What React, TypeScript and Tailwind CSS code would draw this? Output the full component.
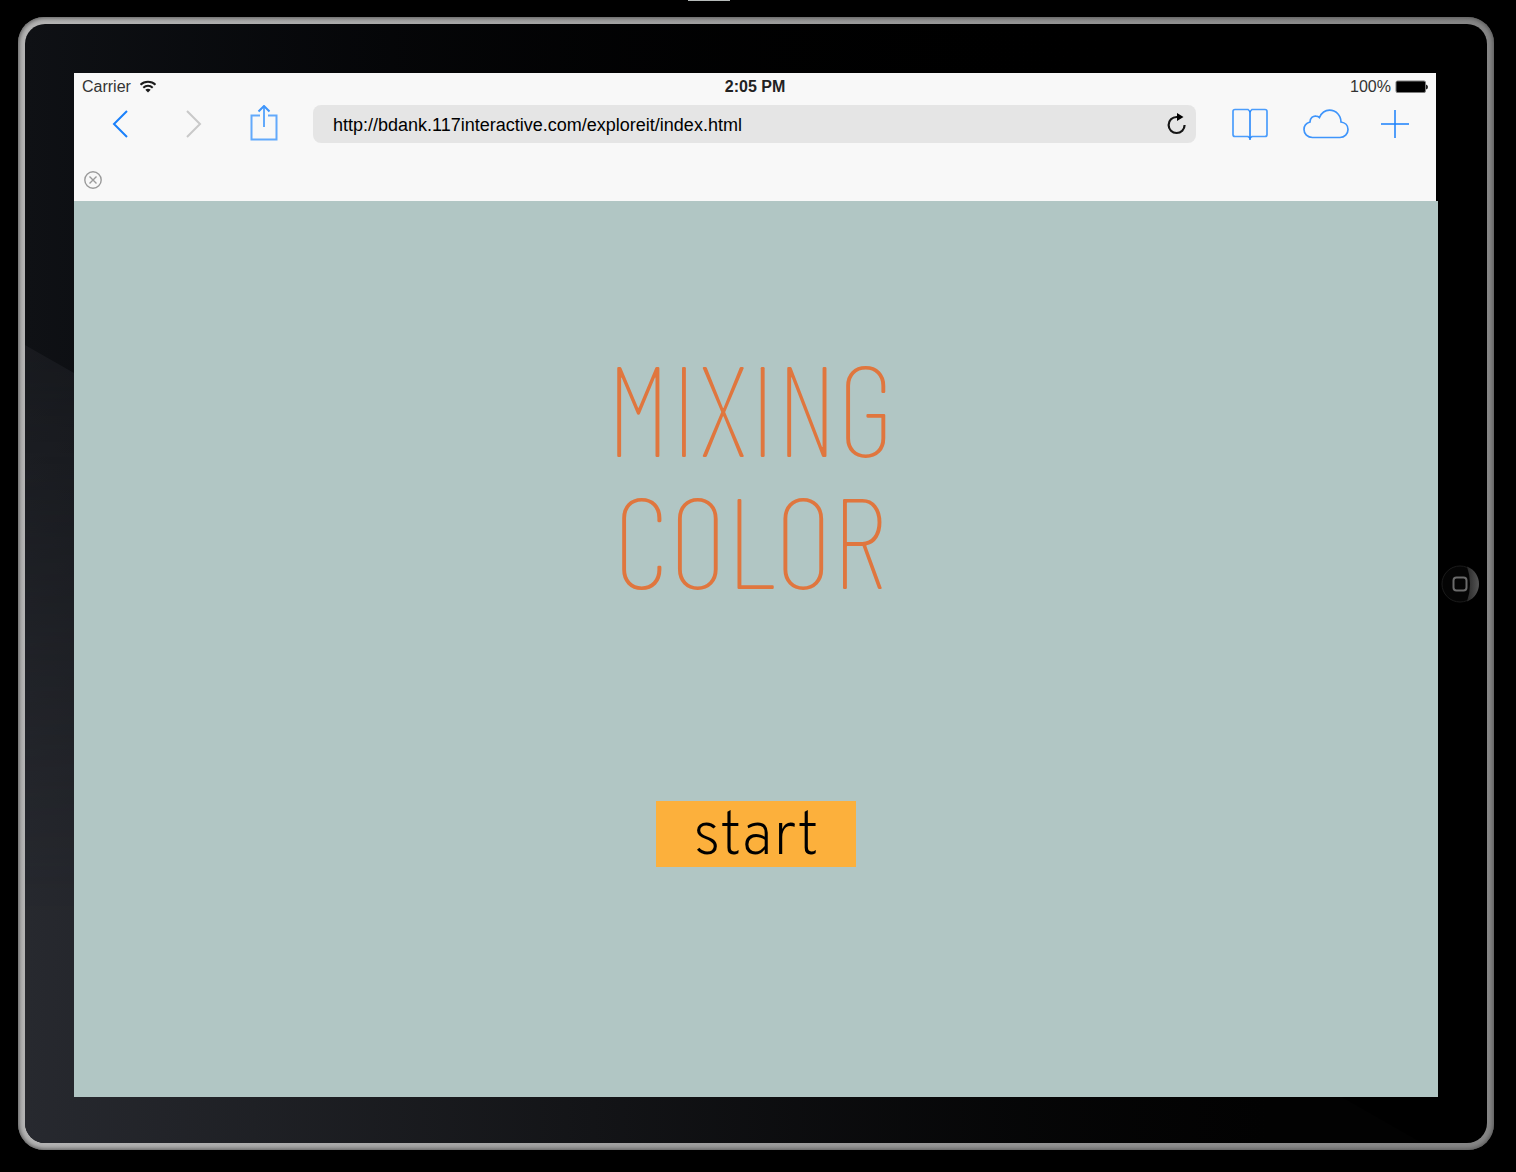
import React from "react";

function Wifi() {
  return (
    <svg width="18" height="14" viewBox="0 0 18 14" fill="none" stroke="#1c1c1c" strokeWidth="2" aria-hidden="true">
      <path d="M1.5 4.700C5.600 0.800 12.400 0.800 16.500 4.700" />
      <path d="M4.300 7.700C7 5.200 11 5.200 13.700 7.700" />
      <path d="M6.300 9.700C7.800 8.400 10.200 8.400 11.700 9.700L9 12.500Z" fill="#1c1c1c" stroke="none" />
    </svg>
  );
}

function Battery() {
  return (
    <svg width="33" height="14" viewBox="0 0 33 14" aria-hidden="true">
      <rect x="1" y="1" width="29.500" height="11.500" rx="1.500" fill="#000" stroke="#7d7d7d" />
      <path d="M31 4.500Q33 5 33 7T31 9.500Z" fill="#222" />
    </svg>
  );
}

function BackIcon() {
  return (
    <svg width="16" height="28" viewBox="0 0 16 28" fill="none" stroke="#1a80fb" strokeWidth="2" aria-hidden="true">
      <path d="M15 1L2 14L15 27" />
    </svg>
  );
}

function ForwardIcon() {
  return (
    <svg width="16" height="28" viewBox="0 0 16 28" fill="none" stroke="#c9c9c9" strokeWidth="2" aria-hidden="true">
      <path d="M1 1L14 14L1 27" />
    </svg>
  );
}

function ShareIcon() {
  return (
    <svg width="28" height="38" viewBox="0 0 28 38" fill="none" stroke="#62a9fb" strokeWidth="2" aria-hidden="true">
      <path d="M10 10.500H1.500V34.500H26.500V10.500H18" />
      <path d="M14 1V22" />
      <path d="M8.500 6.500L14 1L19.500 6.500" stroke="#3f95fb" />
    </svg>
  );
}

function ReloadIcon() {
  return (
    <svg width="19" height="22" viewBox="0 0 19 22" fill="none" aria-hidden="true">
      <path d="M12 4H9.600A8 8 0 1 0 17.600 12" stroke="#161616" strokeWidth="2.200" />
      <path d="M10 0L16.500 4L10 8Z" fill="#000" />
    </svg>
  );
}

function BookIcon() {
  return (
    <svg width="36" height="32" viewBox="0 0 36 32" fill="none" stroke="#4b9dfc" strokeWidth="1.700" aria-hidden="true">
      <path d="M18 3.500L16 1.500H3Q1 1.500 1 3.500V26.500Q1 28.500 3 28.500H16L18 30L20 28.500H33Q35 28.500 35 26.500V3.500Q35 1.500 33 1.500H20Z" />
      <path d="M18 3V32" stroke="#1a80fb" strokeWidth="1.500" />
    </svg>
  );
}

function CloudIcon() {
  return (
    <svg width="46" height="30" viewBox="0 0 46 30" fill="none" stroke="#3f95fb" strokeWidth="1.700" aria-hidden="true">
      <path d="M9.500 28.500C4.500 28.500 1 25 1 20.500C1 16.800 3.500 14 7 13C7 9 10 6.800 13 7.200Q15 7.200 16.500 8.500C18.500 4 22 1.200 26.500 1.200C33 1.200 37.800 6 38 13C42 13.500 45 16.500 45 20.500C45 25 41.500 28.500 37 28.500Z" />
    </svg>
  );
}

function PlusIcon() {
  return (
    <svg width="28" height="28" viewBox="0 0 28 28" fill="none" stroke="#1a80fb" strokeWidth="1.500" aria-hidden="true">
      <path d="M14 0V28M0 14H28" />
    </svg>
  );
}

function CloseIcon() {
  return (
    <svg width="18" height="18" viewBox="0 0 18 18" fill="none" stroke="#9b9b9b" strokeWidth="1.400" aria-hidden="true">
      <circle cx="9" cy="9" r="8.200" />
      <path d="M5.500 5.500L12.500 12.500M12.500 5.500L5.500 12.500" />
    </svg>
  );
}

function StatusBar() {
  return (
    <div className="grid h-7 grid-cols-3 items-center px-2 text-base text-[#333]">
      <div className="flex items-center gap-2">
        <span>Carrier</span>
        <Wifi />
      </div>
      <time className="text-center font-bold text-[#222]">2:05 PM</time>
      <div className="flex items-center justify-end gap-1">
        <span>100%</span>
        <Battery />
      </div>
    </div>
  );
}

function Toolbar() {
  return (
    <nav className="flex h-[46px] items-center pr-[27px] pl-[38px]">
      <button aria-label="Back"><BackIcon /></button>
      <button aria-label="Forward" className="ml-[58px]"><ForwardIcon /></button>
      <button aria-label="Share" className="ml-12"><ShareIcon /></button>
      <div className="ml-[35px] flex h-[38px] flex-1 items-center rounded-lg bg-[#e5e5e5] pr-2.5 pl-5">
        <input
          aria-label="Address"
          type="text"
          defaultValue="http://bdank.117interactive.com/exploreit/index.html"
          className="min-w-0 flex-1 bg-transparent pt-0.5 text-lg text-black outline-none"
        />
        <button aria-label="Reload"><ReloadIcon /></button>
      </div>
      <button aria-label="Bookmarks" className="ml-9"><BookIcon /></button>
      <button aria-label="iCloud tabs" className="ml-[35px]"><CloudIcon /></button>
      <button aria-label="New tab" className="ml-8"><PlusIcon /></button>
    </nav>
  );
}

export default function App() {
  return (
    <div className="flex min-h-screen flex-col bg-black pr-[22px] pb-[22px] font-['Liberation_Sans',Arial,sans-serif]">
      <div className="flex h-[17px] items-start pl-[688px]">
        <div className="h-px w-[42px] bg-[#b5bab9]" />
      </div>
      <div className="relative ml-[18px] flex flex-1 rounded-[26px] bg-linear-to-r from-[#b4b4b4] to-[#858585] p-[7px] shadow-[inset_0_0_4px_1px_#555]">
        <div className="relative flex flex-1 overflow-hidden rounded-[20px] bg-linear-to-r from-[#0f1115] to-black to-80% pt-[49px] pr-[49px] pb-[46px] pl-[49px]">
          <div className="absolute inset-0 bg-linear-to-r from-[#27292f] to-[#020202] to-85% [clip-path:polygon(0_321px,100%_1156px,100%_100%,0_100%)] [mask-image:linear-gradient(to_bottom,rgba(0,0,0,0.4)_30%,black_80%)]" />
          <div className="relative flex flex-1 flex-col">
            <header className="mr-0.5 flex h-32 flex-col bg-[#f8f8f8]">
              <StatusBar />
              <Toolbar />
              <div className="flex flex-1 items-center pt-3 pl-2.5">
                <button aria-label="Close tab"><CloseIcon /></button>
              </div>
            </header>
            <main className="flex flex-1 flex-col items-center bg-[#b1c6c4] pt-[139px]">
              <h1 className="pr-3 text-center font-['Barlow_Condensed','Roboto_Condensed',Roboto,sans-serif] text-[128px] leading-[132px] font-extralight text-[#e0763e]">
                MIXING
                <br />
                COLOR
              </h1>
              <button className="mt-[197px] h-[66px] w-[200px] bg-[#fcb03c] pt-2.5 font-[Overpass,Lato,sans-serif] text-[60px] leading-[56px] font-extralight text-black">
                start
              </button>
            </main>
          </div>
          <button aria-label="Home" className="absolute top-1/2 right-2 -translate-y-1/2 rounded-full">
            <svg width="38" height="38" viewBox="0 0 38 38" fill="none" aria-hidden="true">
              <defs>
                <linearGradient id="homeShine" x1="0" y1="0" x2="1" y2="0">
                  <stop offset="0" stopColor="#2a2a2a" />
                  <stop offset="1" stopColor="#555" />
                </linearGradient>
              </defs>
              <circle cx="19" cy="19" r="18" fill="#050505" stroke="#1b1b1b" />
              <path d="M26 1.500C42 8 42 30 26 36.500Q32 19 26 1.500Z" fill="url(#homeShine)" />
              <rect x="12.500" y="12.500" width="13" height="13" rx="3" stroke="#6a6a6a" strokeWidth="2" />
            </svg>
          </button>
        </div>
      </div>
    </div>
  );
}
